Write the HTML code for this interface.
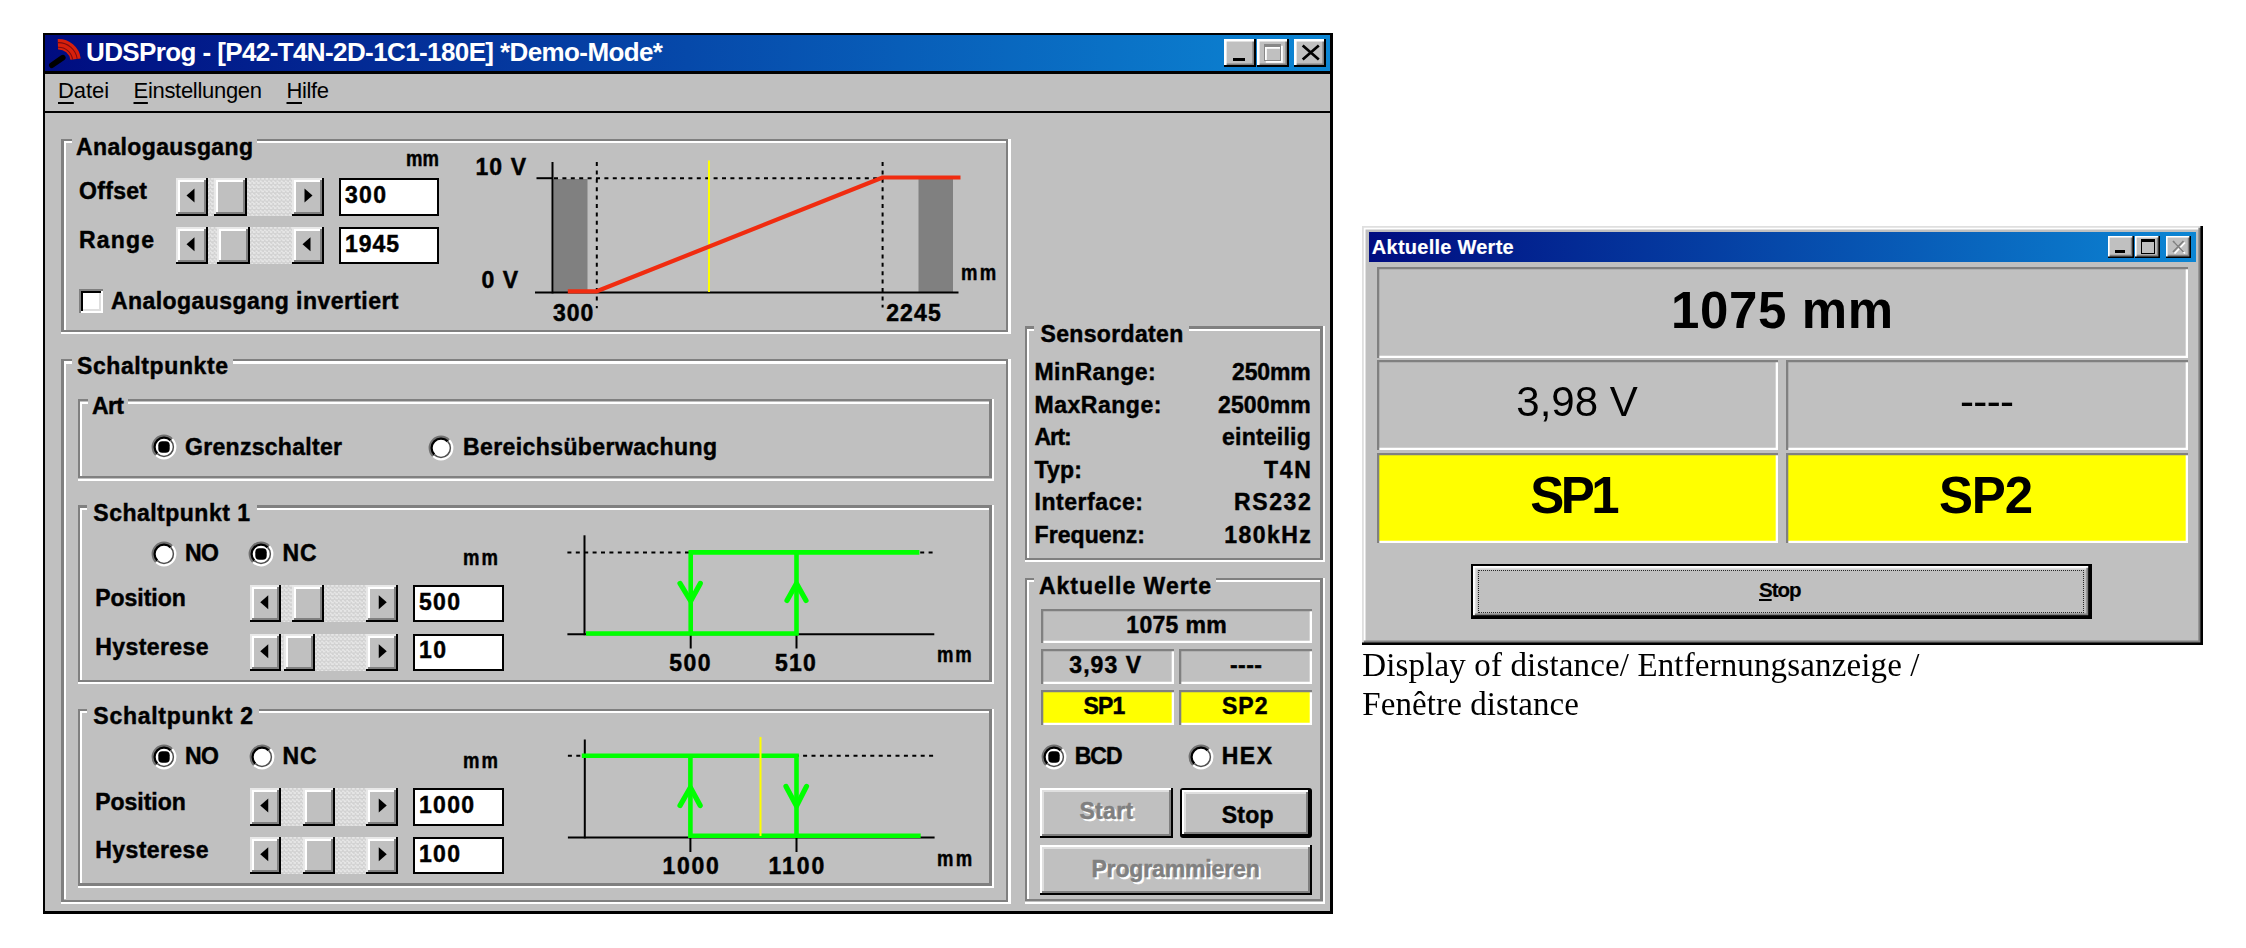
<!DOCTYPE html>
<html><head><meta charset="utf-8"><title>UDSProg</title>
<style>
html,body{margin:0;padding:0;background:#fff;}
body{width:2246px;height:948px;position:relative;overflow:hidden;font-family:"Liberation Sans",sans-serif;}
.a{position:absolute;box-sizing:border-box;}
.t{position:absolute;white-space:pre;margin:0;padding:0;}
.face{background:#c0c0c0;}
.track{background:repeating-conic-gradient(#e6e6e6 0 25%,#d2d2d2 0 50%) 0 0/4.2px 4.2px;}
.raised{background:#c0c0c0;box-shadow:inset -2px -2px 0 #000,inset 2px 2px 0 #e8e8e8,inset -4px -4px 0 #808080,inset 4px 4px 0 #fff;}
.btn{background:#c0c0c0;box-shadow:inset -2px -2px 0 #000,inset 2px 2px 0 #fff,inset -4px -4px 0 #808080,inset 4px 4px 0 #dfdfdf;}
.inp{background:#fff;border:2px solid #000;}
.radio{border-radius:50%;background:#fff;border:2px solid;border-color:#808080 #fff #fff #808080;box-shadow:inset 2px 2px 0 #000, inset -2px -2px 0 #dfdfdf;transform:rotate(0deg);}
u{text-decoration:underline;text-underline-offset:3.8px;text-decoration-thickness:2.3px;}
.capbtn{background:#c0c0c0;box-shadow:inset -2px -2px 0 #000,inset 2.6px 2.6px 0 #fff,inset -3.6px -3.6px 0 #808080;}
#root{position:absolute;left:0;top:0;width:2246px;height:948px;filter:blur(0.55px);}

</style></head>
<body>
<div id="root">
<div class="a" style="left:42.80px;top:32.80px;width:1290.30px;height:881.20px;background:#000"></div>
<div class="a face" style="left:45.40px;top:35.20px;width:1285.10px;height:876.10px;"></div>
<div class="a" style="left:45.40px;top:35.20px;width:1285.10px;height:36.30px;background:linear-gradient(90deg,#000c80 0%,#0c86d4 100%)"></div>
<div class="a" style="left:45.40px;top:71.40px;width:1285.10px;height:2.60px;background:#000"></div>
<div class="a" style="left:45.40px;top:110.80px;width:1285.10px;height:2.40px;background:#000"></div>
<svg class="a" style="left:0;top:0" width="120" height="80">
<path d="M51.8 65.3 L62.8 57.6" stroke="#000" stroke-width="5.6" stroke-linecap="round" fill="none"/>
<path d="M57.9 44.2 A17.3 17.3 0 0 1 75.6 59.1" stroke="#d8200c" stroke-width="10.4" fill="none"/>
<path d="M58 47.3 A14.2 14.2 0 0 1 72.6 59.6" stroke="#7a0c10" stroke-width="1.1" fill="none"/>
<path d="M58 42.6 A18.9 18.9 0 0 1 77.2 58.9" stroke="#7a0c10" stroke-width="1.1" fill="none"/>
</svg>
<div class="t" style="left:86.00px;top:39.19px;font:bold 26px/1 'Liberation Sans',sans-serif;letter-spacing:-0.606px;color:#fff;">UDSProg - [P42-T4N-2D-1C1-180E] *Demo-Mode*</div>
<div class="a capbtn" style="left:1224.30px;top:39.40px;width:32.20px;height:27.40px;"></div>
<div class="a capbtn" style="left:1257.20px;top:39.40px;width:32.20px;height:27.40px;"></div>
<div class="a capbtn" style="left:1293.50px;top:39.40px;width:32.20px;height:27.40px;"></div>
<div class="a" style="left:1233.00px;top:57.50px;width:11.50px;height:3.60px;background:#000"></div>
<div class="a" style="left:1264.00px;top:44.00px;width:17.00px;height:17.00px;border:1.7px solid #888;border-top-width:3.6px;box-shadow:1.8px 1.8px 0 #fff, inset 1.8px 1.8px 0 #fff"></div>
<svg class="a" style="left:1293.5px;top:39px" width="32" height="28"><path d="M8.7 6.6 L24.8 20.6 M24.8 6.6 L8.7 20.6" stroke="#000" stroke-width="2.7" fill="none"/></svg>
<div class="t" style="left:58.00px;top:80.38px;font:normal 22px/1 'Liberation Sans',sans-serif;letter-spacing:-0.090px;color:#000;"><u>D</u>atei</div>
<div class="t" style="left:133.50px;top:80.38px;font:normal 22px/1 'Liberation Sans',sans-serif;letter-spacing:-0.301px;color:#000;"><u>E</u>instellungen</div>
<div class="t" style="left:286.50px;top:80.38px;font:normal 22px/1 'Liberation Sans',sans-serif;letter-spacing:-0.379px;color:#000;"><u>H</u>ilfe</div>
<div class="a" style="left:61.40px;top:138.70px;width:10.60px;height:2.30px;background:#808080"></div>
<div class="a" style="left:257.00px;top:138.70px;width:751.40px;height:2.30px;background:#808080"></div>
<div class="a" style="left:63.70px;top:141.00px;width:8.30px;height:2.30px;background:#fff"></div>
<div class="a" style="left:257.00px;top:141.00px;width:749.10px;height:2.30px;background:#fff"></div>
<div class="a" style="left:61.40px;top:138.70px;width:2.30px;height:193.40px;background:#808080"></div>
<div class="a" style="left:63.70px;top:141.00px;width:2.30px;height:188.80px;background:#fff"></div>
<div class="a" style="left:61.40px;top:329.80px;width:947.00px;height:2.30px;background:#808080"></div>
<div class="a" style="left:61.40px;top:332.10px;width:949.30px;height:2.30px;background:#fff"></div>
<div class="a" style="left:1006.10px;top:138.70px;width:2.30px;height:193.40px;background:#808080"></div>
<div class="a" style="left:1008.40px;top:138.70px;width:2.30px;height:195.70px;background:#fff"></div>
<div class="t" style="left:76.00px;top:135.73px;font:bold 23px/1 'Liberation Sans',sans-serif;letter-spacing:0.374px;color:#000;-webkit-text-stroke:0.45px #000;">Analogausgang</div>
<div class="t" style="left:406.00px;top:148.70px;font:bold 21.5px/1 'Liberation Sans',sans-serif;letter-spacing:0.138px;color:#000;-webkit-text-stroke:0.45px #000;transform:scaleX(0.86);transform-origin:0 0;">mm</div>
<div class="t" style="left:79.00px;top:180.33px;font:bold 23px/1 'Liberation Sans',sans-serif;letter-spacing:0.309px;color:#000;-webkit-text-stroke:0.45px #000;">Offset</div>
<div class="t" style="left:79.00px;top:228.73px;font:bold 23px/1 'Liberation Sans',sans-serif;letter-spacing:1.176px;color:#000;-webkit-text-stroke:0.45px #000;">Range</div>
<div class="a track" style="left:175.50px;top:178.00px;width:148.00px;height:37.50px;"></div>
<div class="a raised" style="left:175.50px;top:178.00px;width:32.00px;height:37.50px;"></div>
<div class="a raised" style="left:291.50px;top:178.00px;width:32.00px;height:37.50px;"></div>
<div class="a raised" style="left:213.50px;top:178.00px;width:33.00px;height:37.50px;"></div>
<svg class="a" style="left:0;top:0" width="2246" height="948"><polygon points="194.5,188.55 194.5,202.55 186.5,195.55" fill="#000"/></svg>
<svg class="a" style="left:0;top:0" width="2246" height="948"><polygon points="304.5,188.55 304.5,202.55 312.5,195.55" fill="#000"/></svg>
<div class="a inp" style="left:339.00px;top:178.00px;width:100.00px;height:37.50px;"></div>
<div class="t" style="left:345.00px;top:184.03px;font:bold 23px/1 'Liberation Sans',sans-serif;letter-spacing:1.312px;color:#000;-webkit-text-stroke:0.45px #000;">300</div>
<div class="a track" style="left:175.50px;top:226.70px;width:148.00px;height:37.50px;"></div>
<div class="a raised" style="left:175.50px;top:226.70px;width:32.00px;height:37.50px;"></div>
<div class="a raised" style="left:291.50px;top:226.70px;width:32.00px;height:37.50px;"></div>
<div class="a raised" style="left:217.30px;top:226.70px;width:33.00px;height:37.50px;"></div>
<svg class="a" style="left:0;top:0" width="2246" height="948"><polygon points="194.5,237.25 194.5,251.25 186.5,244.25" fill="#000"/></svg>
<svg class="a" style="left:0;top:0" width="2246" height="948"><polygon points="310.5,237.25 310.5,251.25 302.5,244.25" fill="#000"/></svg>
<div class="a inp" style="left:339.00px;top:226.70px;width:100.00px;height:37.50px;"></div>
<div class="t" style="left:345.00px;top:232.83px;font:bold 23px/1 'Liberation Sans',sans-serif;letter-spacing:0.943px;color:#000;-webkit-text-stroke:0.45px #000;">1945</div>
<div class="a" style="left:79.20px;top:288.70px;width:24.00px;height:24.00px;background:#fff;box-shadow:inset 2px 2px 0 #808080,inset -2px -2px 0 #fff,inset 4px 4px 0 #000,inset -4px -4px 0 #dfdfdf"></div>
<div class="t" style="left:111.00px;top:290.13px;font:bold 23px/1 'Liberation Sans',sans-serif;letter-spacing:0.442px;color:#000;-webkit-text-stroke:0.45px #000;">Analogausgang invertiert</div>
<svg class="a" style="left:0;top:0" width="2246" height="948">
<rect x="553.5" y="179" width="34" height="113" fill="#808080"/>
<rect x="918.5" y="179" width="34.5" height="113" fill="#808080"/>
<g stroke="#000" stroke-width="2" fill="none">
<path d="M552.5 162 V293.4"/>
<path d="M535 292.4 H958.5"/>
<path d="M536.5 178.2 H552.5"/>
</g>
<g stroke="#000" stroke-width="2" fill="none" stroke-dasharray="4 4.4">
<path d="M596.8 162 V302.5"/>
<path d="M596.8 306 V308.2"/>
<path d="M882.6 162 V307.5"/>
<path d="M554 178.2 H882"/>
</g>
<path d="M709 160.5 V292" stroke="#ffff00" stroke-width="2"/>
<path d="M567.8 291.3 H596.8 L882.6 177.5 H960.5" stroke="#f02c10" stroke-width="4.2" fill="none" stroke-linejoin="round"/>
</svg>
<div class="t" style="left:475.50px;top:155.73px;font:bold 23px/1 'Liberation Sans',sans-serif;letter-spacing:1.057px;color:#000;-webkit-text-stroke:0.45px #000;">10 V</div>
<div class="t" style="left:481.50px;top:269.03px;font:bold 23px/1 'Liberation Sans',sans-serif;letter-spacing:0.984px;color:#000;-webkit-text-stroke:0.45px #000;">0 V</div>
<div class="t" style="left:960.70px;top:262.80px;font:bold 21.5px/1 'Liberation Sans',sans-serif;letter-spacing:2.812px;color:#000;-webkit-text-stroke:0.45px #000;transform:scaleX(0.86);transform-origin:0 0;">mm</div>
<div class="t" style="left:553.00px;top:301.93px;font:bold 23px/1 'Liberation Sans',sans-serif;letter-spacing:0.913px;color:#000;-webkit-text-stroke:0.45px #000;">300</div>
<div class="t" style="left:886.20px;top:301.93px;font:bold 23px/1 'Liberation Sans',sans-serif;letter-spacing:1.143px;color:#000;-webkit-text-stroke:0.45px #000;">2245</div>
<div class="a" style="left:61.40px;top:359.00px;width:10.60px;height:2.30px;background:#808080"></div>
<div class="a" style="left:233.00px;top:359.00px;width:775.40px;height:2.30px;background:#808080"></div>
<div class="a" style="left:63.70px;top:361.30px;width:8.30px;height:2.30px;background:#fff"></div>
<div class="a" style="left:233.00px;top:361.30px;width:773.10px;height:2.30px;background:#fff"></div>
<div class="a" style="left:61.40px;top:359.00px;width:2.30px;height:542.80px;background:#808080"></div>
<div class="a" style="left:63.70px;top:361.30px;width:2.30px;height:538.20px;background:#fff"></div>
<div class="a" style="left:61.40px;top:899.50px;width:947.00px;height:2.30px;background:#808080"></div>
<div class="a" style="left:61.40px;top:901.80px;width:949.30px;height:2.30px;background:#fff"></div>
<div class="a" style="left:1006.10px;top:359.00px;width:2.30px;height:542.80px;background:#808080"></div>
<div class="a" style="left:1008.40px;top:359.00px;width:2.30px;height:545.10px;background:#fff"></div>
<div class="t" style="left:77.00px;top:355.43px;font:bold 23px/1 'Liberation Sans',sans-serif;letter-spacing:0.598px;color:#000;-webkit-text-stroke:0.45px #000;">Schaltpunkte</div>
<div class="a" style="left:77.90px;top:399.20px;width:10.10px;height:2.30px;background:#808080"></div>
<div class="a" style="left:128.00px;top:399.20px;width:863.70px;height:2.30px;background:#808080"></div>
<div class="a" style="left:80.20px;top:401.50px;width:7.80px;height:2.30px;background:#fff"></div>
<div class="a" style="left:128.00px;top:401.50px;width:861.40px;height:2.30px;background:#fff"></div>
<div class="a" style="left:77.90px;top:399.20px;width:2.30px;height:79.30px;background:#808080"></div>
<div class="a" style="left:80.20px;top:401.50px;width:2.30px;height:74.70px;background:#fff"></div>
<div class="a" style="left:77.90px;top:476.20px;width:913.80px;height:2.30px;background:#808080"></div>
<div class="a" style="left:77.90px;top:478.50px;width:916.10px;height:2.30px;background:#fff"></div>
<div class="a" style="left:989.40px;top:399.20px;width:2.30px;height:79.30px;background:#808080"></div>
<div class="a" style="left:991.70px;top:399.20px;width:2.30px;height:81.60px;background:#fff"></div>
<div class="t" style="left:92.00px;top:395.13px;font:bold 23px/1 'Liberation Sans',sans-serif;letter-spacing:-0.617px;color:#000;-webkit-text-stroke:0.45px #000;">Art</div>
<svg class="a" style="left:148.60px;top:432.30px" width="30" height="30" viewBox="-15 -15 30 30"><circle r="10" fill="#fff"/><path d="M7.92 -7.92 A11.2 11.2 0 0 1 -7.92 7.92" stroke="#fff" stroke-width="2.4" fill="none"/><path d="M-7.92 7.92 A11.2 11.2 0 0 1 7.92 -7.92" stroke="#707070" stroke-width="2.4" fill="none"/><path d="M-6.65 6.65 A9.4 9.4 0 0 1 6.65 -6.65" stroke="#000" stroke-width="2.2" fill="none"/><path d="M6.65 -6.65 A9.4 9.4 0 0 1 -6.65 6.65" stroke="#505050" stroke-width="1.5" fill="none"/><rect x="-5.7" y="-5.7" width="11.4" height="11.4" rx="4" fill="#000"/></svg>
<div class="t" style="left:185.00px;top:435.83px;font:bold 23px/1 'Liberation Sans',sans-serif;letter-spacing:0.299px;color:#000;-webkit-text-stroke:0.45px #000;">Grenzschalter</div>
<svg class="a" style="left:426.40px;top:432.50px" width="30" height="30" viewBox="-15 -15 30 30"><circle r="10" fill="#fff"/><path d="M7.92 -7.92 A11.2 11.2 0 0 1 -7.92 7.92" stroke="#fff" stroke-width="2.4" fill="none"/><path d="M-7.92 7.92 A11.2 11.2 0 0 1 7.92 -7.92" stroke="#707070" stroke-width="2.4" fill="none"/><path d="M-6.65 6.65 A9.4 9.4 0 0 1 6.65 -6.65" stroke="#000" stroke-width="2.2" fill="none"/><path d="M6.65 -6.65 A9.4 9.4 0 0 1 -6.65 6.65" stroke="#505050" stroke-width="1.5" fill="none"/></svg>
<div class="t" style="left:463.00px;top:435.83px;font:bold 23px/1 'Liberation Sans',sans-serif;letter-spacing:0.406px;color:#000;-webkit-text-stroke:0.45px #000;">Bereichsüberwachung</div>
<div class="a" style="left:77.90px;top:505.40px;width:9.60px;height:2.30px;background:#808080"></div>
<div class="a" style="left:257.00px;top:505.40px;width:734.70px;height:2.30px;background:#808080"></div>
<div class="a" style="left:80.20px;top:507.70px;width:7.30px;height:2.30px;background:#fff"></div>
<div class="a" style="left:257.00px;top:507.70px;width:732.40px;height:2.30px;background:#fff"></div>
<div class="a" style="left:77.90px;top:505.40px;width:2.30px;height:176.70px;background:#808080"></div>
<div class="a" style="left:80.20px;top:507.70px;width:2.30px;height:172.10px;background:#fff"></div>
<div class="a" style="left:77.90px;top:679.80px;width:913.80px;height:2.30px;background:#808080"></div>
<div class="a" style="left:77.90px;top:682.10px;width:916.10px;height:2.30px;background:#fff"></div>
<div class="a" style="left:989.40px;top:505.40px;width:2.30px;height:176.70px;background:#808080"></div>
<div class="a" style="left:991.70px;top:505.40px;width:2.30px;height:179.00px;background:#fff"></div>
<div class="t" style="left:93.30px;top:501.73px;font:bold 23px/1 'Liberation Sans',sans-serif;letter-spacing:0.491px;color:#000;-webkit-text-stroke:0.45px #000;">Schaltpunkt 1</div>
<svg class="a" style="left:148.60px;top:538.60px" width="30" height="30" viewBox="-15 -15 30 30"><circle r="10" fill="#fff"/><path d="M7.92 -7.92 A11.2 11.2 0 0 1 -7.92 7.92" stroke="#fff" stroke-width="2.4" fill="none"/><path d="M-7.92 7.92 A11.2 11.2 0 0 1 7.92 -7.92" stroke="#707070" stroke-width="2.4" fill="none"/><path d="M-6.65 6.65 A9.4 9.4 0 0 1 6.65 -6.65" stroke="#000" stroke-width="2.2" fill="none"/><path d="M6.65 -6.65 A9.4 9.4 0 0 1 -6.65 6.65" stroke="#505050" stroke-width="1.5" fill="none"/></svg>
<div class="t" style="left:185.00px;top:542.03px;font:bold 23px/1 'Liberation Sans',sans-serif;letter-spacing:-0.700px;color:#000;-webkit-text-stroke:0.45px #000;">NO</div>
<svg class="a" style="left:246.20px;top:538.60px" width="30" height="30" viewBox="-15 -15 30 30"><circle r="10" fill="#fff"/><path d="M7.92 -7.92 A11.2 11.2 0 0 1 -7.92 7.92" stroke="#fff" stroke-width="2.4" fill="none"/><path d="M-7.92 7.92 A11.2 11.2 0 0 1 7.92 -7.92" stroke="#707070" stroke-width="2.4" fill="none"/><path d="M-6.65 6.65 A9.4 9.4 0 0 1 6.65 -6.65" stroke="#000" stroke-width="2.2" fill="none"/><path d="M6.65 -6.65 A9.4 9.4 0 0 1 -6.65 6.65" stroke="#505050" stroke-width="1.5" fill="none"/><rect x="-5.7" y="-5.7" width="11.4" height="11.4" rx="4" fill="#000"/></svg>
<div class="t" style="left:282.60px;top:542.03px;font:bold 23px/1 'Liberation Sans',sans-serif;letter-spacing:0.866px;color:#000;-webkit-text-stroke:0.45px #000;">NC</div>
<div class="t" style="left:463.00px;top:547.80px;font:bold 21.5px/1 'Liberation Sans',sans-serif;letter-spacing:2.463px;color:#000;-webkit-text-stroke:0.45px #000;transform:scaleX(0.86);transform-origin:0 0;">mm</div>
<div class="t" style="left:95.30px;top:587.43px;font:bold 23px/1 'Liberation Sans',sans-serif;letter-spacing:-0.048px;color:#000;-webkit-text-stroke:0.45px #000;">Position</div>
<div class="a track" style="left:249.50px;top:584.80px;width:148.00px;height:37.30px;"></div>
<div class="a raised" style="left:249.50px;top:584.80px;width:31.50px;height:37.30px;"></div>
<div class="a raised" style="left:366.00px;top:584.80px;width:31.50px;height:37.30px;"></div>
<div class="a raised" style="left:292.00px;top:584.80px;width:31.50px;height:37.30px;"></div>
<svg class="a" style="left:0;top:0" width="2246" height="948"><polygon points="268.25,595.2499999999999 268.25,609.2499999999999 260.25,602.2499999999999" fill="#000"/></svg>
<svg class="a" style="left:0;top:0" width="2246" height="948"><polygon points="378.75,595.2499999999999 378.75,609.2499999999999 386.75,602.2499999999999" fill="#000"/></svg>
<div class="a inp" style="left:412.80px;top:584.80px;width:91.00px;height:37.30px;"></div>
<div class="t" style="left:419.00px;top:591.03px;font:bold 23px/1 'Liberation Sans',sans-serif;letter-spacing:1.312px;color:#000;-webkit-text-stroke:0.45px #000;">500</div>
<div class="t" style="left:95.30px;top:635.73px;font:bold 23px/1 'Liberation Sans',sans-serif;letter-spacing:0.404px;color:#000;-webkit-text-stroke:0.45px #000;">Hysterese</div>
<div class="a track" style="left:249.50px;top:633.70px;width:148.00px;height:37.30px;"></div>
<div class="a raised" style="left:249.50px;top:633.70px;width:31.50px;height:37.30px;"></div>
<div class="a raised" style="left:366.00px;top:633.70px;width:31.50px;height:37.30px;"></div>
<div class="a raised" style="left:283.50px;top:633.70px;width:31.50px;height:37.30px;"></div>
<svg class="a" style="left:0;top:0" width="2246" height="948"><polygon points="268.25,644.15 268.25,658.15 260.25,651.15" fill="#000"/></svg>
<svg class="a" style="left:0;top:0" width="2246" height="948"><polygon points="378.75,644.15 378.75,658.15 386.75,651.15" fill="#000"/></svg>
<div class="a inp" style="left:412.80px;top:633.70px;width:91.00px;height:37.30px;"></div>
<div class="t" style="left:419.00px;top:639.33px;font:bold 23px/1 'Liberation Sans',sans-serif;letter-spacing:1.406px;color:#000;-webkit-text-stroke:0.45px #000;">10</div>
<svg class="a" style="left:0;top:0" width="2246" height="948">
<g stroke="#000" stroke-width="2" fill="none">
<path d="M584.5 535.3 V635.2"/>
<path d="M567.4 634.2 H934.3"/>
<path d="M690.7 634 V648.5"/>
<path d="M796.5 634 V648.5"/>
</g>
<path d="M567.4 552.4 H934.3" stroke="#000" stroke-width="2" stroke-dasharray="4 4.4"/>
<g stroke="#00ff00" stroke-width="4.6" fill="none" stroke-linejoin="miter">
<path d="M586 633.5 H796.5 V552.4"/>
<path d="M690.7 633.5 V552.4 H688.5 H919.4"/>
<path d="M680 583.4 L690.7 601 L700.3 583.4" stroke-width="5.2" stroke-linecap="round" stroke-linejoin="round"/>
<path d="M787 600.5 L796.5 583.5 L806 600.5" stroke-width="5.2" stroke-linecap="round" stroke-linejoin="round"/>
</g>
</svg>
<div class="t" style="left:669.30px;top:651.53px;font:bold 23px/1 'Liberation Sans',sans-serif;letter-spacing:1.413px;color:#000;-webkit-text-stroke:0.45px #000;">500</div>
<div class="t" style="left:775.00px;top:651.53px;font:bold 23px/1 'Liberation Sans',sans-serif;letter-spacing:1.163px;color:#000;-webkit-text-stroke:0.45px #000;">510</div>
<div class="t" style="left:937.00px;top:645.30px;font:bold 21.5px/1 'Liberation Sans',sans-serif;letter-spacing:2.114px;color:#000;-webkit-text-stroke:0.45px #000;transform:scaleX(0.86);transform-origin:0 0;">mm</div>
<div class="a" style="left:77.90px;top:708.80px;width:9.60px;height:2.30px;background:#808080"></div>
<div class="a" style="left:259.00px;top:708.80px;width:732.70px;height:2.30px;background:#808080"></div>
<div class="a" style="left:80.20px;top:711.10px;width:7.30px;height:2.30px;background:#fff"></div>
<div class="a" style="left:259.00px;top:711.10px;width:730.40px;height:2.30px;background:#fff"></div>
<div class="a" style="left:77.90px;top:708.80px;width:2.30px;height:176.80px;background:#808080"></div>
<div class="a" style="left:80.20px;top:711.10px;width:2.30px;height:172.20px;background:#fff"></div>
<div class="a" style="left:77.90px;top:883.30px;width:913.80px;height:2.30px;background:#808080"></div>
<div class="a" style="left:77.90px;top:885.60px;width:916.10px;height:2.30px;background:#fff"></div>
<div class="a" style="left:989.40px;top:708.80px;width:2.30px;height:176.80px;background:#808080"></div>
<div class="a" style="left:991.70px;top:708.80px;width:2.30px;height:179.10px;background:#fff"></div>
<div class="t" style="left:93.30px;top:704.93px;font:bold 23px/1 'Liberation Sans',sans-serif;letter-spacing:0.741px;color:#000;-webkit-text-stroke:0.45px #000;">Schaltpunkt 2</div>
<svg class="a" style="left:149.00px;top:741.60px" width="30" height="30" viewBox="-15 -15 30 30"><circle r="10" fill="#fff"/><path d="M7.92 -7.92 A11.2 11.2 0 0 1 -7.92 7.92" stroke="#fff" stroke-width="2.4" fill="none"/><path d="M-7.92 7.92 A11.2 11.2 0 0 1 7.92 -7.92" stroke="#707070" stroke-width="2.4" fill="none"/><path d="M-6.65 6.65 A9.4 9.4 0 0 1 6.65 -6.65" stroke="#000" stroke-width="2.2" fill="none"/><path d="M6.65 -6.65 A9.4 9.4 0 0 1 -6.65 6.65" stroke="#505050" stroke-width="1.5" fill="none"/><rect x="-5.7" y="-5.7" width="11.4" height="11.4" rx="4" fill="#000"/></svg>
<div class="t" style="left:185.00px;top:745.03px;font:bold 23px/1 'Liberation Sans',sans-serif;letter-spacing:-0.700px;color:#000;-webkit-text-stroke:0.45px #000;">NO</div>
<svg class="a" style="left:247.00px;top:741.60px" width="30" height="30" viewBox="-15 -15 30 30"><circle r="10" fill="#fff"/><path d="M7.92 -7.92 A11.2 11.2 0 0 1 -7.92 7.92" stroke="#fff" stroke-width="2.4" fill="none"/><path d="M-7.92 7.92 A11.2 11.2 0 0 1 7.92 -7.92" stroke="#707070" stroke-width="2.4" fill="none"/><path d="M-6.65 6.65 A9.4 9.4 0 0 1 6.65 -6.65" stroke="#000" stroke-width="2.2" fill="none"/><path d="M6.65 -6.65 A9.4 9.4 0 0 1 -6.65 6.65" stroke="#505050" stroke-width="1.5" fill="none"/></svg>
<div class="t" style="left:282.60px;top:745.03px;font:bold 23px/1 'Liberation Sans',sans-serif;letter-spacing:0.866px;color:#000;-webkit-text-stroke:0.45px #000;">NC</div>
<div class="t" style="left:463.00px;top:750.80px;font:bold 21.5px/1 'Liberation Sans',sans-serif;letter-spacing:2.463px;color:#000;-webkit-text-stroke:0.45px #000;transform:scaleX(0.86);transform-origin:0 0;">mm</div>
<div class="t" style="left:95.30px;top:790.73px;font:bold 23px/1 'Liberation Sans',sans-serif;letter-spacing:-0.048px;color:#000;-webkit-text-stroke:0.45px #000;">Position</div>
<div class="a track" style="left:249.50px;top:788.00px;width:148.00px;height:37.50px;"></div>
<div class="a raised" style="left:249.50px;top:788.00px;width:31.50px;height:37.50px;"></div>
<div class="a raised" style="left:366.00px;top:788.00px;width:31.50px;height:37.50px;"></div>
<div class="a raised" style="left:303.00px;top:788.00px;width:31.50px;height:37.50px;"></div>
<svg class="a" style="left:0;top:0" width="2246" height="948"><polygon points="268.25,798.55 268.25,812.55 260.25,805.55" fill="#000"/></svg>
<svg class="a" style="left:0;top:0" width="2246" height="948"><polygon points="378.75,798.55 378.75,812.55 386.75,805.55" fill="#000"/></svg>
<div class="a inp" style="left:412.80px;top:788.00px;width:91.00px;height:37.50px;"></div>
<div class="t" style="left:419.00px;top:794.03px;font:bold 23px/1 'Liberation Sans',sans-serif;letter-spacing:1.276px;color:#000;-webkit-text-stroke:0.45px #000;">1000</div>
<div class="t" style="left:95.30px;top:839.33px;font:bold 23px/1 'Liberation Sans',sans-serif;letter-spacing:0.404px;color:#000;-webkit-text-stroke:0.45px #000;">Hysterese</div>
<div class="a track" style="left:249.50px;top:836.60px;width:148.00px;height:37.50px;"></div>
<div class="a raised" style="left:249.50px;top:836.60px;width:31.50px;height:37.50px;"></div>
<div class="a raised" style="left:366.00px;top:836.60px;width:31.50px;height:37.50px;"></div>
<div class="a raised" style="left:303.00px;top:836.60px;width:31.50px;height:37.50px;"></div>
<svg class="a" style="left:0;top:0" width="2246" height="948"><polygon points="268.25,847.15 268.25,861.15 260.25,854.15" fill="#000"/></svg>
<svg class="a" style="left:0;top:0" width="2246" height="948"><polygon points="378.75,847.15 378.75,861.15 386.75,854.15" fill="#000"/></svg>
<div class="a inp" style="left:412.80px;top:836.60px;width:91.00px;height:37.50px;"></div>
<div class="t" style="left:419.00px;top:842.53px;font:bold 23px/1 'Liberation Sans',sans-serif;letter-spacing:1.312px;color:#000;-webkit-text-stroke:0.45px #000;">100</div>
<svg class="a" style="left:0;top:0" width="2246" height="948">
<g stroke="#000" stroke-width="2" fill="none">
<path d="M584.8 739.5 V838.4"/>
<path d="M567.9 837.4 H934.6"/>
<path d="M690.4 837 V852"/>
<path d="M796.5 837 V852"/>
</g>
<path d="M567.9 755.7 H934.6" stroke="#000" stroke-width="2" stroke-dasharray="4 4.4"/>
<g stroke="#00ff00" stroke-width="4.6" fill="none" stroke-linejoin="miter">
<path d="M581.8 755.7 H796.5 V835.8 H920.7"/>
<path d="M690.4 755.7 V835.8 H796.5"/>
<path d="M680 805.6 L690.4 787.5 L700.2 805.6" stroke-width="5.2" stroke-linecap="round" stroke-linejoin="round"/>
<path d="M786 786.4 L796.5 806 L806.5 786.4" stroke-width="5.2" stroke-linecap="round" stroke-linejoin="round"/>
</g>
<path d="M760.5 737 V836" stroke="#ffff00" stroke-width="2"/>
</svg>
<div class="t" style="left:662.60px;top:854.53px;font:bold 23px/1 'Liberation Sans',sans-serif;letter-spacing:1.643px;color:#000;-webkit-text-stroke:0.45px #000;">1000</div>
<div class="t" style="left:768.60px;top:854.53px;font:bold 23px/1 'Liberation Sans',sans-serif;letter-spacing:1.965px;color:#000;-webkit-text-stroke:0.45px #000;">1100</div>
<div class="t" style="left:936.50px;top:848.50px;font:bold 21.5px/1 'Liberation Sans',sans-serif;letter-spacing:2.812px;color:#000;-webkit-text-stroke:0.45px #000;transform:scaleX(0.86);transform-origin:0 0;">mm</div>
<div class="a" style="left:1024.60px;top:326.30px;width:9.90px;height:2.30px;background:#808080"></div>
<div class="a" style="left:1189.00px;top:326.30px;width:133.70px;height:2.30px;background:#808080"></div>
<div class="a" style="left:1026.90px;top:328.60px;width:7.60px;height:2.30px;background:#fff"></div>
<div class="a" style="left:1189.00px;top:328.60px;width:131.40px;height:2.30px;background:#fff"></div>
<div class="a" style="left:1024.60px;top:326.30px;width:2.30px;height:233.60px;background:#808080"></div>
<div class="a" style="left:1026.90px;top:328.60px;width:2.30px;height:229.00px;background:#fff"></div>
<div class="a" style="left:1024.60px;top:557.60px;width:298.10px;height:2.30px;background:#808080"></div>
<div class="a" style="left:1024.60px;top:559.90px;width:300.40px;height:2.30px;background:#fff"></div>
<div class="a" style="left:1320.40px;top:326.30px;width:2.30px;height:233.60px;background:#808080"></div>
<div class="a" style="left:1322.70px;top:326.30px;width:2.30px;height:235.90px;background:#fff"></div>
<div class="t" style="left:1040.50px;top:322.93px;font:bold 23px/1 'Liberation Sans',sans-serif;letter-spacing:0.347px;color:#000;-webkit-text-stroke:0.45px #000;">Sensordaten</div>
<div class="t" style="left:1034.50px;top:361.33px;font:bold 23px/1 'Liberation Sans',sans-serif;letter-spacing:0.442px;color:#000;-webkit-text-stroke:0.45px #000;">MinRange:</div>
<div class="t" style="left:1232.00px;top:361.33px;font:bold 23px/1 'Liberation Sans',sans-serif;letter-spacing:-0.120px;color:#000;-webkit-text-stroke:0.45px #000;">250mm</div>
<div class="t" style="left:1034.50px;top:393.83px;font:bold 23px/1 'Liberation Sans',sans-serif;letter-spacing:0.525px;color:#000;-webkit-text-stroke:0.45px #000;">MaxRange:</div>
<div class="t" style="left:1218.00px;top:393.83px;font:bold 23px/1 'Liberation Sans',sans-serif;letter-spacing:0.144px;color:#000;-webkit-text-stroke:0.45px #000;">2500mm</div>
<div class="t" style="left:1034.50px;top:426.33px;font:bold 23px/1 'Liberation Sans',sans-serif;letter-spacing:-1.230px;color:#000;-webkit-text-stroke:0.45px #000;">Art:</div>
<div class="t" style="left:1222.00px;top:426.33px;font:bold 23px/1 'Liberation Sans',sans-serif;letter-spacing:0.237px;color:#000;-webkit-text-stroke:0.45px #000;">einteilig</div>
<div class="t" style="left:1034.50px;top:458.83px;font:bold 23px/1 'Liberation Sans',sans-serif;letter-spacing:0.219px;color:#000;-webkit-text-stroke:0.45px #000;">Typ:</div>
<div class="t" style="left:1264.00px;top:458.83px;font:bold 23px/1 'Liberation Sans',sans-serif;letter-spacing:1.673px;color:#000;-webkit-text-stroke:0.45px #000;">T4N</div>
<div class="t" style="left:1034.50px;top:491.33px;font:bold 23px/1 'Liberation Sans',sans-serif;letter-spacing:0.550px;color:#000;-webkit-text-stroke:0.45px #000;">Interface:</div>
<div class="t" style="left:1234.00px;top:491.33px;font:bold 23px/1 'Liberation Sans',sans-serif;letter-spacing:1.618px;color:#000;-webkit-text-stroke:0.45px #000;">RS232</div>
<div class="t" style="left:1034.50px;top:523.93px;font:bold 23px/1 'Liberation Sans',sans-serif;letter-spacing:0.076px;color:#000;-webkit-text-stroke:0.45px #000;">Frequenz:</div>
<div class="t" style="left:1224.30px;top:523.93px;font:bold 23px/1 'Liberation Sans',sans-serif;letter-spacing:1.444px;color:#000;-webkit-text-stroke:0.45px #000;">180kHz</div>
<div class="a" style="left:1024.60px;top:577.80px;width:9.90px;height:2.30px;background:#808080"></div>
<div class="a" style="left:1216.00px;top:577.80px;width:106.70px;height:2.30px;background:#808080"></div>
<div class="a" style="left:1026.90px;top:580.10px;width:7.60px;height:2.30px;background:#fff"></div>
<div class="a" style="left:1216.00px;top:580.10px;width:104.40px;height:2.30px;background:#fff"></div>
<div class="a" style="left:1024.60px;top:577.80px;width:2.30px;height:323.70px;background:#808080"></div>
<div class="a" style="left:1026.90px;top:580.10px;width:2.30px;height:319.10px;background:#fff"></div>
<div class="a" style="left:1024.60px;top:899.20px;width:298.10px;height:2.30px;background:#808080"></div>
<div class="a" style="left:1024.60px;top:901.50px;width:300.40px;height:2.30px;background:#fff"></div>
<div class="a" style="left:1320.40px;top:577.80px;width:2.30px;height:323.70px;background:#808080"></div>
<div class="a" style="left:1322.70px;top:577.80px;width:2.30px;height:326.00px;background:#fff"></div>
<div class="t" style="left:1039.00px;top:574.93px;font:bold 23px/1 'Liberation Sans',sans-serif;letter-spacing:0.972px;color:#000;-webkit-text-stroke:0.45px #000;">Aktuelle Werte</div>
<div class="a" style="left:1040.80px;top:608.80px;width:271.60px;height:34.70px;background:#c0c0c0;box-shadow:inset 2.3px 2.3px 0 #808080, inset -2.3px -2.3px 0 #fff"></div>
<div class="t" style="left:1126.30px;top:613.53px;font:bold 23px/1 'Liberation Sans',sans-serif;letter-spacing:0.305px;color:#000;-webkit-text-stroke:0.45px #000;">1075 mm</div>
<div class="a" style="left:1040.80px;top:649.10px;width:132.90px;height:35.20px;background:#c0c0c0;box-shadow:inset 2.3px 2.3px 0 #808080, inset -2.3px -2.3px 0 #fff"></div>
<div class="t" style="left:1069.30px;top:653.73px;font:bold 23px/1 'Liberation Sans',sans-serif;letter-spacing:1.040px;color:#000;-webkit-text-stroke:0.45px #000;">3,93 V</div>
<div class="a" style="left:1179.40px;top:649.10px;width:133.00px;height:35.20px;background:#c0c0c0;box-shadow:inset 2.3px 2.3px 0 #808080, inset -2.3px -2.3px 0 #fff"></div>
<div class="t" style="left:1230.00px;top:653.73px;font:bold 23px/1 'Liberation Sans',sans-serif;letter-spacing:0.453px;color:#000;-webkit-text-stroke:0.45px #000;">----</div>
<div class="a" style="left:1040.80px;top:689.50px;width:132.90px;height:35.40px;background:#ffff00;box-shadow:inset 2.3px 2.3px 0 #808080, inset -2.3px -2.3px 0 #fff"></div>
<div class="t" style="left:1083.40px;top:694.83px;font:bold 23px/1 'Liberation Sans',sans-serif;letter-spacing:-0.842px;color:#000;-webkit-text-stroke:0.45px #000;">SP1</div>
<div class="a" style="left:1179.40px;top:689.50px;width:133.00px;height:35.40px;background:#ffff00;box-shadow:inset 2.3px 2.3px 0 #808080, inset -2.3px -2.3px 0 #fff"></div>
<div class="t" style="left:1222.00px;top:694.83px;font:bold 23px/1 'Liberation Sans',sans-serif;letter-spacing:1.008px;color:#000;-webkit-text-stroke:0.45px #000;">SP2</div>
<svg class="a" style="left:1038.50px;top:741.70px" width="30" height="30" viewBox="-15 -15 30 30"><circle r="10" fill="#fff"/><path d="M7.92 -7.92 A11.2 11.2 0 0 1 -7.92 7.92" stroke="#fff" stroke-width="2.4" fill="none"/><path d="M-7.92 7.92 A11.2 11.2 0 0 1 7.92 -7.92" stroke="#707070" stroke-width="2.4" fill="none"/><path d="M-6.65 6.65 A9.4 9.4 0 0 1 6.65 -6.65" stroke="#000" stroke-width="2.2" fill="none"/><path d="M6.65 -6.65 A9.4 9.4 0 0 1 -6.65 6.65" stroke="#505050" stroke-width="1.5" fill="none"/><rect x="-5.7" y="-5.7" width="11.4" height="11.4" rx="4" fill="#000"/></svg>
<div class="t" style="left:1074.70px;top:745.03px;font:bold 23px/1 'Liberation Sans',sans-serif;letter-spacing:-0.972px;color:#000;-webkit-text-stroke:0.45px #000;">BCD</div>
<svg class="a" style="left:1185.70px;top:741.70px" width="30" height="30" viewBox="-15 -15 30 30"><circle r="10" fill="#fff"/><path d="M7.92 -7.92 A11.2 11.2 0 0 1 -7.92 7.92" stroke="#fff" stroke-width="2.4" fill="none"/><path d="M-7.92 7.92 A11.2 11.2 0 0 1 7.92 -7.92" stroke="#707070" stroke-width="2.4" fill="none"/><path d="M-6.65 6.65 A9.4 9.4 0 0 1 6.65 -6.65" stroke="#000" stroke-width="2.2" fill="none"/><path d="M6.65 -6.65 A9.4 9.4 0 0 1 -6.65 6.65" stroke="#505050" stroke-width="1.5" fill="none"/></svg>
<div class="t" style="left:1221.80px;top:745.03px;font:bold 23px/1 'Liberation Sans',sans-serif;letter-spacing:1.452px;color:#000;-webkit-text-stroke:0.45px #000;">HEX</div>
<div class="a btn" style="left:1040.30px;top:787.80px;width:133.00px;height:50.60px;"></div>
<div class="t" style="left:1081.40px;top:801.93px;font:bold 23px/1 'Liberation Sans',sans-serif;letter-spacing:0.348px;color:#fff;-webkit-text-stroke:0.45px #fff;">Start</div>
<div class="t" style="left:1079.40px;top:799.93px;font:bold 23px/1 'Liberation Sans',sans-serif;letter-spacing:0.348px;color:#808080;-webkit-text-stroke:0.45px #808080;">Start</div>
<div class="a" style="left:1179.60px;top:787.80px;width:132.50px;height:50.60px;background:#000;border-radius:3px"></div>
<div class="a btn" style="left:1181.80px;top:790.00px;width:128.10px;height:46.20px;"></div>
<div class="t" style="left:1221.80px;top:804.13px;font:bold 23px/1 'Liberation Sans',sans-serif;letter-spacing:0.197px;color:#000;-webkit-text-stroke:0.45px #000;">Stop</div>
<div class="a btn" style="left:1040.30px;top:844.70px;width:271.80px;height:50.70px;"></div>
<div class="t" style="left:1093.40px;top:859.93px;font:bold 23px/1 'Liberation Sans',sans-serif;letter-spacing:-0.135px;color:#fff;-webkit-text-stroke:0.45px #fff;">Programmieren</div>
<div class="t" style="left:1091.40px;top:857.93px;font:bold 23px/1 'Liberation Sans',sans-serif;letter-spacing:-0.135px;color:#808080;-webkit-text-stroke:0.45px #808080;">Programmieren</div>
<div class="a" style="left:1361.50px;top:225.50px;width:841.50px;height:419.20px;background:#c0c0c0;box-shadow:inset -2.6px -2.6px 0 #000,inset 1.8px 1.8px 0 #dfdfdf,inset -4.6px -4.6px 0 #808080,inset 3.5px 3.5px 0 #fff"></div>
<div class="a" style="left:1368.50px;top:231.80px;width:827.30px;height:30.20px;background:linear-gradient(90deg,#000c80 0%,#0c86d4 100%)"></div>
<div class="t" style="left:1371.80px;top:236.77px;font:bold 20px/1 'Liberation Sans',sans-serif;letter-spacing:0.256px;color:#fff;-webkit-text-stroke:0.15px #fff;">Aktuelle Werte</div>
<div class="a" style="left:2108.00px;top:235.60px;width:25.50px;height:22.20px;background:#c0c0c0;box-shadow:inset -1.6px -1.6px 0 #000,inset 1.6px 1.6px 0 #fff,inset -3.2px -3.2px 0 #808080"></div>
<div class="a" style="left:2134.80px;top:235.60px;width:25.50px;height:22.20px;background:#c0c0c0;box-shadow:inset -1.6px -1.6px 0 #000,inset 1.6px 1.6px 0 #fff,inset -3.2px -3.2px 0 #808080"></div>
<div class="a" style="left:2165.70px;top:235.60px;width:25.50px;height:22.20px;background:#c0c0c0;box-shadow:inset -1.6px -1.6px 0 #000,inset 1.6px 1.6px 0 #fff,inset -3.2px -3.2px 0 #808080"></div>
<div class="a" style="left:2115.00px;top:250.00px;width:10.00px;height:3.20px;background:#000"></div>
<div class="a" style="left:2140.50px;top:239.20px;width:14.50px;height:14.40px;border:1.8px solid #000;border-top-width:3px"></div>
<svg class="a" style="left:2165.7px;top:235.6px" width="26" height="23"><path d="M8.5 6.5 L19 17.5 M19 6.5 L8.5 17.5" stroke="#fff" stroke-width="1.8" fill="none"/><path d="M7 5 L17.5 16 M17.5 5 L7 16" stroke="#808080" stroke-width="1.8" fill="none"/></svg>
<div class="a" style="left:1376.60px;top:267.00px;width:811.20px;height:90.60px;background:#c0c0c0;box-shadow:inset 2.3px 2.3px 0 #808080, inset -2.3px -2.3px 0 #fff"></div>
<div class="t" style="left:1671.00px;top:285.03px;font:bold 51px/1 'Liberation Sans',sans-serif;letter-spacing:0.612px;color:#000;">1075 mm</div>
<div class="a" style="left:1376.60px;top:360.40px;width:401.90px;height:89.80px;background:#c0c0c0;box-shadow:inset 2.3px 2.3px 0 #808080, inset -2.3px -2.3px 0 #fff"></div>
<div class="t" style="left:1516.30px;top:381.05px;font:normal 42px/1 'Liberation Sans',sans-serif;letter-spacing:-0.007px;color:#000;">3,98 V</div>
<div class="a" style="left:1786.20px;top:360.40px;width:401.60px;height:89.80px;background:#c0c0c0;box-shadow:inset 2.3px 2.3px 0 #808080, inset -2.3px -2.3px 0 #fff"></div>
<div class="t" style="left:1960.00px;top:381.05px;font:normal 42px/1 'Liberation Sans',sans-serif;letter-spacing:-0.651px;color:#000;">----</div>
<div class="a" style="left:1376.60px;top:452.50px;width:401.90px;height:90.50px;background:#ffff00;box-shadow:inset 2.3px 2.3px 0 #808080, inset -2.3px -2.3px 0 #fff"></div>
<div class="t" style="left:1530.20px;top:470.13px;font:bold 51px/1 'Liberation Sans',sans-serif;letter-spacing:-3.503px;color:#000;">SP1</div>
<div class="a" style="left:1786.20px;top:452.50px;width:401.60px;height:90.50px;background:#ffff00;box-shadow:inset 2.3px 2.3px 0 #808080, inset -2.3px -2.3px 0 #fff"></div>
<div class="t" style="left:1939.00px;top:470.13px;font:bold 51px/1 'Liberation Sans',sans-serif;letter-spacing:-1.203px;color:#000;">SP2</div>
<div class="a" style="left:1471.20px;top:563.70px;width:620.80px;height:55.30px;background:#000"></div>
<div class="a" style="left:1473.20px;top:565.70px;width:616.60px;height:51.30px;background:#c0c0c0;box-shadow:inset -1.8px -1.8px 0 #000,inset 1.8px 1.8px 0 #fff,inset -3.6px -3.6px 0 #808080,inset 3.6px 3.6px 0 #dfdfdf"></div>
<div class="a" style="left:1478.20px;top:570.20px;width:606.00px;height:43.00px;border:1.7px dotted #282828"></div>
<div class="t" style="left:1759.00px;top:579.85px;font:bold 20.5px/1 'Liberation Sans',sans-serif;letter-spacing:-1.016px;color:#000;-webkit-text-stroke:0.2px #000;"><u style="text-underline-offset:1.6px;text-decoration-thickness:1.8px">S</u>top</div>
</div>
<div class="t" style="left:1362.30px;top:649.06px;font:normal 33px/1 'Liberation Serif',serif;letter-spacing:0.139px;color:#000;">Display of distance/ Entfernungsanzeige /</div>
<div class="t" style="left:1362.30px;top:688.36px;font:normal 33px/1 'Liberation Serif',serif;letter-spacing:0.091px;color:#000;">Fenêtre distance</div>
</body></html>
